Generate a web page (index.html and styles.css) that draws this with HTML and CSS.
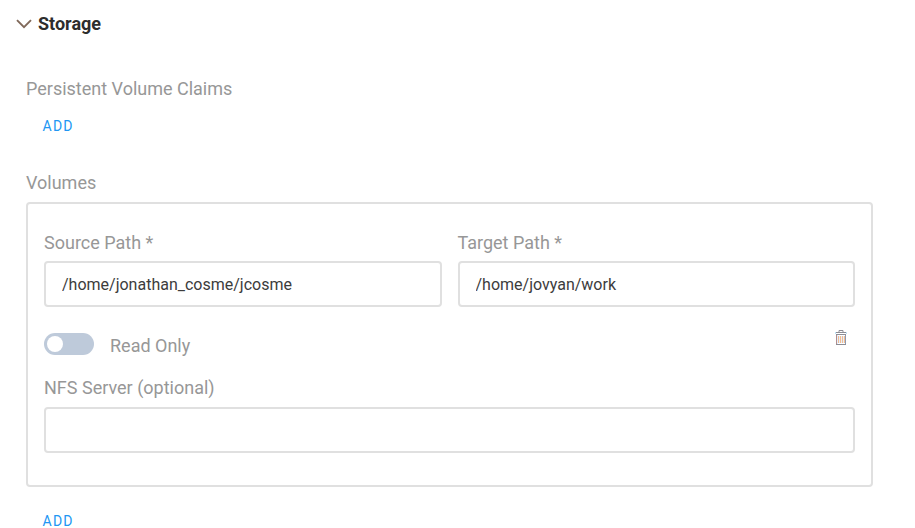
FILE: index.html
```html
<!DOCTYPE html>
<html lang="en">
<head>
<meta charset="utf-8">
<title>Storage</title>
<link rel="stylesheet" href="styles.css">
</head>
<body>
<main class="page">
  <header class="section-header">
    <svg class="chevron" width="16" height="10" viewBox="0 0 16 10"><path d="M1 1.2 8 8.2 15 1.2"/></svg>
    <h1 class="title">Storage</h1>
  </header>
  <section class="claims">
    <div class="label">Persistent Volume Claims</div>
    <button class="add" type="button">ADD</button>
  </section>
  <section class="volumes">
    <div class="label">Volumes</div>
    <div class="card">
      <div class="paths">
        <label class="field"><span class="label">Source Path *</span><input class="input" type="text" value="/home/jonathan_cosme/jcosme"></label>
        <label class="field"><span class="label">Target Path *</span><input class="input" type="text" value="/home/jovyan/work"></label>
      </div>
      <div class="options">
        <span class="switch"><span class="knob"></span></span>
        <span class="label switch-label">Read Only</span>
        <svg class="trash" width="12" height="16" viewBox="0 0 12 16">
          <path class="gaps" d="M2.5 5V14M4.5 6V13M6.5 6V13M8.5 6V13"/>
          <path class="slats" d="M3.5 6V13M5.5 6V13M7.5 6V13M9.5 6V13"/>
          <path class="side-left" d="M1.5 5V14"/>
          <path class="side-right" d="M10.5 5V14"/>
          <path class="edge" d="M.5 2V4M11.5 2V4"/>
          <path class="frame" d="M4 2V.5H8V2M1 2.5H11M1 4.5H11M1 14.5H11"/>
        </svg>
      </div>
      <label class="field"><span class="label">NFS Server (optional)</span><input class="input" type="text"></label>
    </div>
    <button class="add" type="button">ADD</button>
  </section>
</main>
</body>
</html>
```

FILE: styles.css
```css
* { box-sizing: border-box; }
html { overflow: hidden; }
body {
  margin: 0;
  background: #fff;
  color: #3c3c3c;
  font-family: Roboto, sans-serif;
}
.page { padding: 12px 42px 0 16px; }
.section-header {
  display: flex;
  align-items: center;
  gap: 6px;
  height: 24px;
}
.chevron { fill: none; stroke: #80695a; stroke-width: 1.9; }
.title { margin: 0; font-size: 18px; line-height: 24px; font-weight: 700; color: #2d2d2d; }
.claims { margin: 41px 0 0 10px; height: 94px; }
.volumes { margin-left: 10px; }
.label {
  display: block;
  font-size: 18px;
  line-height: 24px;
  color: #979797;
}
.add {
  display: block;
  margin: 7px 0 0;
  padding: 0 16.5px;
  height: 36px;
  border: 0;
  background: none;
  color: #2196f3;
  font: 400 14px/36px Roboto, sans-serif;
  letter-spacing: 1.25px;
}
.card {
  height: 285px;
  margin-top: 7px;
  padding: 27px 16px 0;
  border: 2px solid #e0e0e0;
  border-radius: 4px;
}
.card + .add { margin-top: 16px; }
.paths { display: grid; grid-template-columns: 1fr 1fr; gap: 16px; }
.field { display: block; }
.input {
  display: block;
  width: 100%;
  height: 46px;
  margin-top: 6px;
  padding: 0 16px;
  border: 2px solid #e0e0e0;
  border-radius: 4px;
  outline: 0;
  background: #fff;
  color: #3c3c3c;
  font: 400 16px Roboto, sans-serif;
}
.options { display: flex; align-items: flex-start; height: 69px; padding-top: 26px; }
.options + .field .input { margin-top: 7px; }
.switch {
  width: 50px;
  height: 22px;
  padding: 3px;
  border-radius: 11px;
  background: #becada;
}
.knob { display: block; width: 16px; height: 16px; border-radius: 50%; background: #fff; }
.switch-label { margin: 1px 0 0 16px; }
.trash { margin: -3px 8px 0 auto; fill: none; }
.frame { stroke: #8c8c94; }
.edge { stroke: #bfe3f7; }
.side-left { stroke: #b08e8e; }
.side-right { stroke: #8e9ab0; }
.gaps { stroke: #e4eefa; }
.slats { stroke: #f3bd92; }
```
